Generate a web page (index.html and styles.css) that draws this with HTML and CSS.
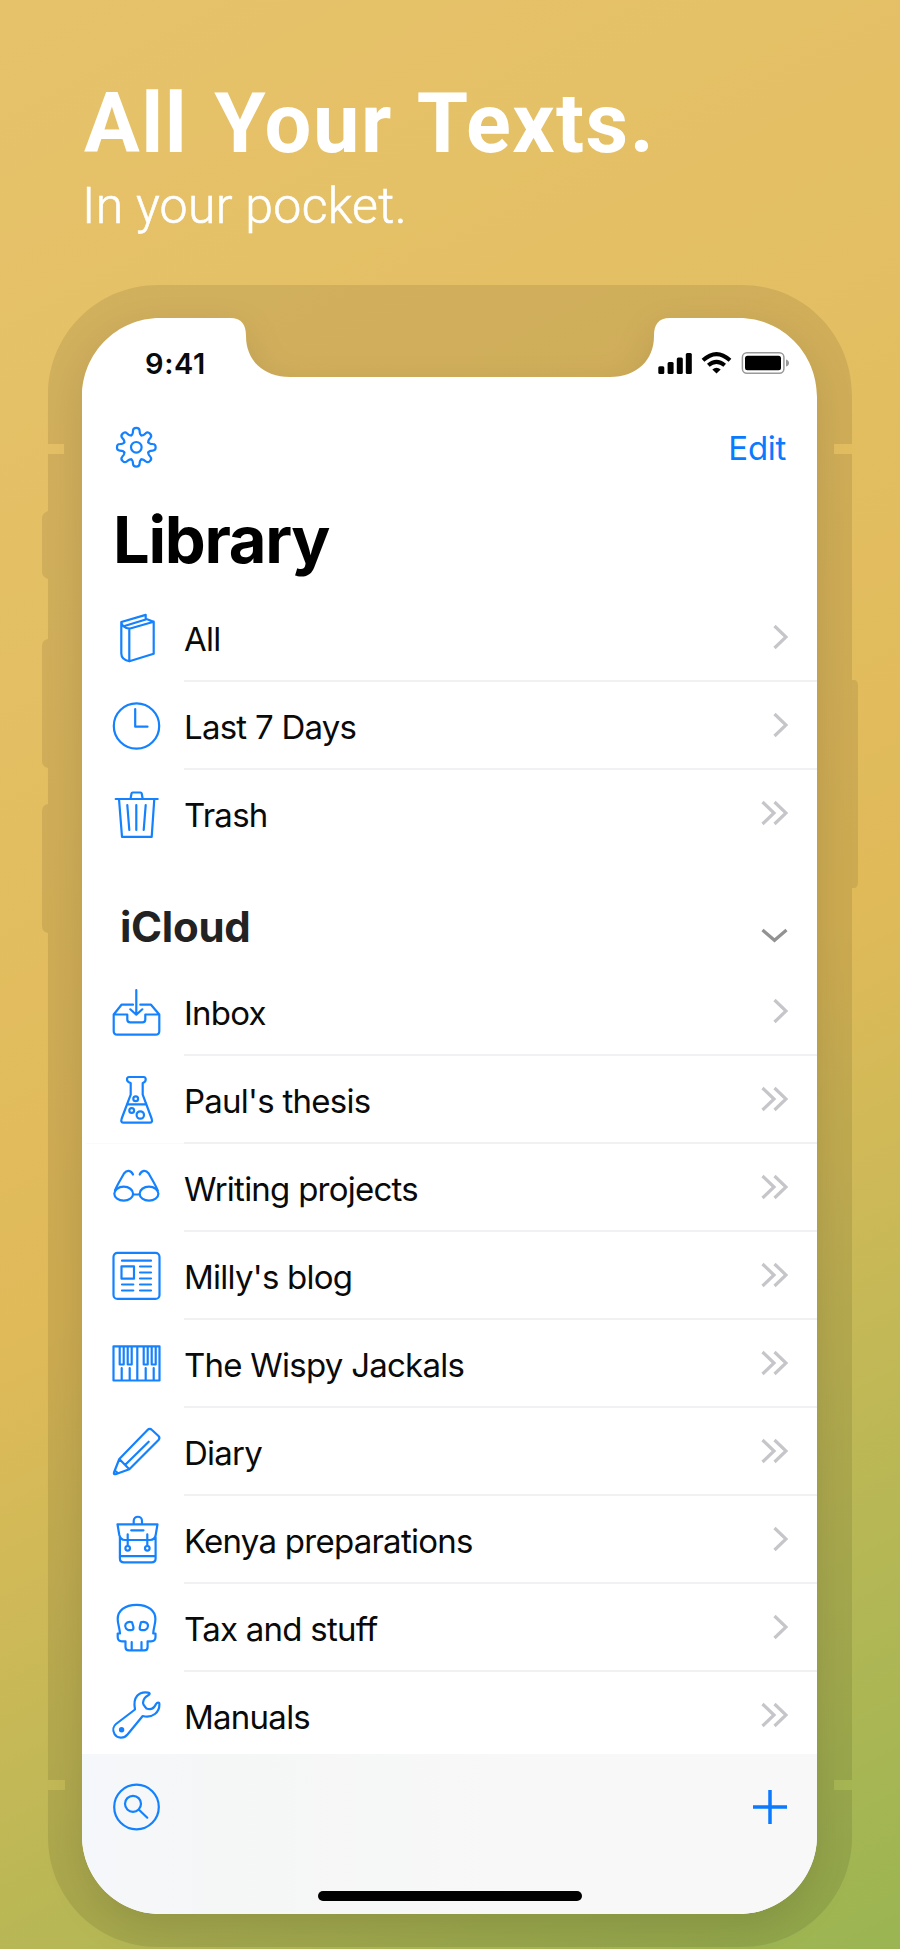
FILE: index.html
```html
<!DOCTYPE html>
<html lang="en">
<head>
<meta charset="utf-8">
<title>Library</title>
<link rel="stylesheet" href="styles.css">
</head>
<body>
<svg class="device" viewBox="0 0 900 1949" aria-hidden="true">
  <path class="frame" d="M158 285H742C803 285 852 334 852 395V444H834V454H852V680H855Q858 681 858 686V882Q858 887 855 888H852V1780H834V1790H852V1837C852 1898 803 1947 742 1947H158C97 1947 48 1898 48 1837V1790H65V1780H48V933Q42 932 42 926V811Q42 805 48 804V768Q42 767 42 761V646Q42 640 48 639V579Q42 577 42 572V518Q42 513 48 511V454H64V444H48V395C48 334 97 285 158 285Z"/>
  <path class="glass" d="M160 318H230C242 318 246 325 246 336C246 360 263 377 290 377H610C637 377 654 360 654 336C654 325 658 318 670 318H739C782 318 817 353 817 397V1835C817 1879 782 1914 739 1914H160C117 1914 82 1879 82 1835V397C82 353 117 318 160 318Z"/>
</svg>
<header class="hero">
  <h1>All Your Texts.</h1>
  <p>In your pocket.</p>
</header>
<main class="screen">
  <div class="status">
    <span class="time">9:41</span>
    <svg class="indicators" viewBox="0 0 132 24">
      <g><rect x=".3" y="15.3" width="6" height="7.7" rx="1.5"/><rect x="9.6" y="11" width="6" height="12" rx="1.5"/><rect x="18.8" y="6.4" width="6" height="16.6" rx="1.5"/><rect x="27.8" y="2" width="6" height="21" rx="1.5"/></g>
      <path class="wifi" d="M45 9.3Q58.500-3.200 72 9.300M50.300 14.300Q58.500 7.300 66.700 14.300"/>
      <path d="M54.300 18.500Q58.500 15 62.700 18.500L58.500 22.500Z"/>
      <rect class="cell" x="84.400" y="1.800" width="41.500" height="20.500" rx="4.500"/>
      <rect x="87" y="4.700" width="36" height="14.600" rx="2.500"/>
      <path class="nub" d="M128 8.500Q131 9.500 131 12T128 15.500Z"/>
    </svg>
  </div>
  <div class="navbar">
    <svg class="icon" viewBox="-24.300 -23.300 48 48">
      <defs><path id="tooth" d="M-5-12Q-3.700-13-3.500-14.500L-3.300-16.500C-3.200-20.300 3.200-20.300 3.300-16.500L3.500-14.500Q3.700-13 5-12"/></defs>
      <use href="#tooth"/><use href="#tooth" transform="rotate(45)"/><use href="#tooth" transform="rotate(90)"/><use href="#tooth" transform="rotate(135)"/><use href="#tooth" transform="rotate(180)"/><use href="#tooth" transform="rotate(225)"/><use href="#tooth" transform="rotate(270)"/><use href="#tooth" transform="rotate(315)"/>
      <circle r="5.300"/>
    </svg>
    <span class="edit">Edit</span>
  </div>
  <h2 class="title">Library</h2>

  <ul class="list">
    <li><svg class="icon" viewBox="0 0 48 48"><path d="M9.300 8V39.500Q9.300 45.500 17.300 47.300L41.700 39.700V7.700L17.300 14.700V47.300M17.300 14.700Q9.800 13.500 9.300 8L33.700 .9V4.700L41.700 7.700M12.500 12L33.700 5.500"/></svg><div class="cell-row"><span>All</span><svg class="chev" viewBox="0 0 28 28"><path d="M14.500 3L26 14L14.500 25"/></svg></div></li>
    <li><svg class="icon" viewBox="0 0 48 48"><circle cx="24.500" cy="24" r="22.700"/><path d="M23.200 7V24.700H35.500"/></svg><div class="cell-row"><span>Last 7 Days</span><svg class="chev" viewBox="0 0 28 28"><path d="M14.500 3L26 14L14.500 25"/></svg></div></li>
    <li><svg class="icon" viewBox="0 0 48 48"><path d="M3.700 9H45.700M18.500 9L19.500 3.500Q19.700 2.500 20.700 2.500H28.500Q29.500 2.500 29.700 3.500L30.700 9M7 9L10 46.800H39.700L42.300 9M15.300 15L17.300 40M24.300 15V40M33.700 15L31.700 40"/></svg><div class="cell-row last"><span>Trash</span><svg class="chev" viewBox="0 0 28 28"><path d="M2.500 3L14 14L2.500 25M14.500 3L26 14L14.500 25"/></svg></div></li>
  </ul>

  <div class="section"><h3>iCloud</h3><svg class="chev down" viewBox="0 0 28 28"><path d="M2.500 9L14.500 19.300L26.500 9"/></svg></div>

  <ul class="list">
    <li><svg class="icon" viewBox="0 0 48 48"><path d="M24.300 2V26.500M18.300 21.300L24.300 26.700L30.300 21.300M21 16.700H9.500L1.700 26.500V43Q1.700 46.700 5.300 46.700H43.700Q47.300 46.700 47.300 43V26.500L39 16.700H28.300M1.700 26.500H15.300V31.500Q15.300 34.300 18.300 34.300H30.500Q33.300 34.300 33.300 31.500V26.500H47.300"/></svg><div class="cell-row"><span>Inbox</span><svg class="chev" viewBox="0 0 28 28"><path d="M14.500 3L26 14L14.500 25"/></svg></div></li>
    <li><svg class="icon" viewBox="0 0 48 48"><path d="M17 1H31.700Q33.700 1 33.700 3.500T30.700 7V18.700L39.600 42.500Q41 46.700 37.500 46.700H11.800Q8.300 46.700 9.700 42.500L18.700 18.700V7Q15 6 15 3.500T17 1ZM15 28.300H34.300"/><circle cx="23.700" cy="22.700" r="2.400"/><circle cx="19.700" cy="34.500" r="2.400"/><circle cx="28.300" cy="39" r="3.700"/></svg><div class="cell-row"><span>Paul's thesis</span><svg class="chev" viewBox="0 0 28 28"><path d="M2.500 3L14 14L2.500 25M14.500 3L26 14L14.500 25"/></svg></div></li>
    <li class="lined"><svg class="icon" viewBox="0 0 48 48"><ellipse cx="11.700" cy="29.700" rx="9.400" ry="7"/><ellipse cx="37" cy="29.700" rx="9.400" ry="7"/><path d="M21.200 30.500H27.500M3 26.500C5 21 9 15 12 9.500C15 5.500 19 6 21 10.500M45.700 26.500C43.700 21 39.700 15 36.700 9.500C33.700 5.500 29.700 6 27.700 10.500"/></svg><div class="cell-row"><span>Writing projects</span><svg class="chev" viewBox="0 0 28 28"><path d="M2.500 3L14 14L2.500 25M14.500 3L26 14L14.500 25"/></svg></div></li>
    <li><svg class="icon" viewBox="0 0 48 48"><rect x="1.500" y=".9" width="46" height="46" rx="4"/><path d="M10 8.700H39M28 14.500H39M28 20.500H39M28 26.500H39M28 32.500H39M28 38.500H39M10 32.500H21.300M10 38.500H21.300M9.500 14.300H22V26.700H9.500Z"/></svg><div class="cell-row"><span>Milly's blog</span><svg class="chev" viewBox="0 0 28 28"><path d="M2.500 3L14 14L2.500 25M14.500 3L26 14L14.500 25"/></svg></div></li>
    <li><svg class="icon" viewBox="0 0 48 48"><path d="M1.500 6.300H47.500V40.500H1.500ZM25.300 6.300V40.500M7.700 6.300V24.500H11.700V6.300M15.700 6.300V24.500H19.700V6.300M31.700 6.300V24.500H35.700V6.300M39.700 6.300V24.500H43.700V6.300M9.700 28V40M17.700 28V40M33.700 28V40M41.700 28V40"/></svg><div class="cell-row"><span>The Wispy Jackals</span><svg class="chev" viewBox="0 0 28 28"><path d="M2.500 3L14 14L2.500 25M14.500 3L26 14L14.500 25"/></svg></div></li>
    <li><svg class="icon" viewBox="0 0 48 48"><path d="M7.300 31L35.500 2Q37.700-.3 40 2L46.500 8Q48.300 10 46.500 12L17.300 41.200L3.500 46.200Q1.500 46.500 2 44.500ZM7.300 31L17.300 41.200M2.500 43Q5 43.500 5.300 45.300M13.300 36.700L36.700 13.700"/></svg><div class="cell-row"><span>Diary</span><svg class="chev" viewBox="0 0 28 28"><path d="M2.500 3L14 14L2.500 25M14.500 3L26 14L14.500 25"/></svg></div></li>
    <li><svg class="icon" viewBox="0 0 48 48"><path d="M21.700 8V5C21.700-.7 30 -.7 30 5V8M5.500 8.300H45.500L43.700 19Q42.800 24 38 24H13Q8.500 24 7.300 19ZM7.900 21V42.500Q7.900 46.400 12 46.400H39.500Q43.600 46.400 43.600 42.500V21M7.900 40.200H43.600M19.200 14.300H31.500M15.700 18.300V30M35.300 18.300V30"/><circle cx="15.700" cy="32.300" r="2.300"/><circle cx="35.300" cy="32.300" r="2.300"/></svg><div class="cell-row"><span>Kenya preparations</span><svg class="chev" viewBox="0 0 28 28"><path d="M14.500 3L26 14L14.500 25"/></svg></div></li>
    <li><svg class="icon" viewBox="0 0 48 48"><path d="M24.500 .9C12.500 .9 5.700 7 5.700 15C5.700 20 7.500 23 8 29.500H5.700V33Q5.700 37.300 10 37.300H13.500V43Q13.500 46.400 17 46.400H32.300Q35.600 46.400 35.600 43V37.300H39Q43.500 37.300 43.500 33V29.500H41.200C41.700 23 43.400 20 43.400 15C43.400 7 36.500 .9 24.500 .9ZM19.700 38V46M29.500 38V46M20 18.200C16.500 17 13 19 13.200 22C13.500 26 17 26.500 20 26Q22 25.500 21.300 22.500ZM29 18.200C32.500 17 36.200 19 36 22C35.700 26 32 26.500 29 26Q27.200 25.500 27.900 22.500Z"/></svg><div class="cell-row"><span>Tax and stuff</span><svg class="chev" viewBox="0 0 28 28"><path d="M14.500 3L26 14L14.500 25"/></svg></div></li>
    <li class="cut"><svg class="icon" viewBox="0 0 48 48"><path d="M4 32L23 17.500C20.500 5 27 -.8 36 .6Q38.800 1 37 2.800C32.500 5.500 31.500 7 31 11C31 13 33 14.500 34.500 16.500C39 18.300 42 16.500 44 12C45.300 10 47.500 10 47.400 12.500C47.500 20 41 26.500 30.700 24L15.500 42.500C12 47 5 46.500 2.500 42C.3 38 1.500 34 4 32Z"/><circle class="dot" cx="9.600" cy="37.800" r="1.600"/></svg><div class="cell-row last"><span>Manuals</span><svg class="chev" viewBox="0 0 28 28"><path d="M2.500 3L14 14L2.500 25M14.500 3L26 14L14.500 25"/></svg></div></li>
  </ul>

  <footer class="toolbar">
    <div class="tools">
      <svg class="icon" viewBox="0 0 48 48"><circle cx="24.500" cy="24" r="22.300"/><circle cx="21" cy="20.800" r="8"/><path d="M26.700 26.500L35.300 34.700"/></svg>
      <svg class="plus" viewBox="0 0 34 34"><path d="M17 0V34M0 17H34"/></svg>
    </div>
    <div class="home"></div>
  </footer>
</main>
</body>
</html>
```
FILE: styles.css
```css
* { box-sizing: border-box; margin: 0; padding: 0; }

body {
  position: relative;
  width: 900px;
  height: 1949px;
  overflow: hidden;
  font-family: Inter, "Liberation Sans", sans-serif;
  color: #0a0a0a;
  background: linear-gradient(153deg, #e6c26b 0%, #e3be61 35%, #e0ba59 56%, #9ab552 100%);
}

/* Phone outline behind the content */
.device { position: absolute; inset: 0; width: 900px; height: 1949px; }
.frame { fill: rgba(0, 0, 0, .085); }
.glass { fill: #fff; filter: drop-shadow(0 14px 18px rgba(0, 0, 0, .1)); }

.hero {
  position: relative;
  height: 318px;
  padding: 75px 0 0 84px;
  color: #fff;
  font-family: Roboto, sans-serif;
  white-space: nowrap;
}
.hero h1 { font-size: 83px; line-height: 97px; font-weight: 700; letter-spacing: 1.500px; word-spacing: 4px; }
.hero p {
  margin: 4px 0 0 -2px;
  font-size: 50px;
  line-height: 60px;
  font-weight: 300;
  letter-spacing: .3px;
  -webkit-text-stroke: .6px #fff;
}

.screen {
  position: relative;
  display: flex;
  flex-direction: column;
  width: 735px;
  height: 1596px;
  margin-left: 82px;
}

.status {
  display: flex;
  justify-content: space-between;
  height: 106px;
  padding: 33px 27px 0 63px;
}
.time { font-size: 29px; line-height: 26px; font-weight: 600; letter-spacing: .6px; }
.indicators { width: 132px; height: 24px; fill: #000; }
.wifi { fill: none; stroke: #000; stroke-width: 4; }
.cell { fill: none; stroke: #999; stroke-width: 1.500; }
.nub { fill: #999; }

.navbar {
  display: flex;
  justify-content: space-between;
  height: 69px;
  padding: 0 31px 0 30px;
}
.edit { color: #0a7aff; font-size: 33px; line-height: 48px; letter-spacing: -.3px; }

.icon {
  flex: none;
  width: 48px;
  height: 48px;
  overflow: visible;
  fill: none;
  stroke: #1482ff;
  stroke-width: 2.200;
  stroke-linecap: round;
  stroke-linejoin: round;
}
.icon .dot { fill: #1482ff; }

.title {
  height: 100px;
  padding-left: 31px;
  font-size: 65px;
  line-height: 94px;
  font-weight: 700;
  letter-spacing: -1.300px;
  color: #000;
}

.list { list-style: none; }
.list li { display: flex; height: 88px; padding-left: 30px; }
.list li > .icon { margin: 21px 24px 0 0; }
.list li.cut { height: 83px; }
.list li.lined { background: linear-gradient(#fafafa, #fafafa) 4px 0 / 98px 1px no-repeat; }
.cell-row {
  display: flex;
  flex: 1;
  justify-content: space-between;
  align-items: center;
  height: 89px;
  padding: 0 29px 0 0;
  border-bottom: 2px solid #f1f1f3;
  font-size: 33px;
}
.cell-row.last { border-color: transparent; }
.cell-row span { padding-top: 4px; letter-spacing: -.75px; }
.chev {
  width: 28px;
  height: 28px;
  fill: none;
  stroke: #c6c6ca;
  stroke-width: 3.200;
}
.chev.down { stroke: #929292; }

.section {
  display: flex;
  justify-content: space-between;
  align-items: center;
  height: 110px;
  padding: 30px 29px 0 38px;
}
.section h3 { font-size: 42px; line-height: 50px; font-weight: 700; letter-spacing: -.3px; color: #222; }
.section .chev { margin-top: 15px; }

.toolbar {
  flex: 1;
  padding: 29px 30px 0;
  border-radius: 0 0 78px 78px;
  background: linear-gradient(90deg, #f5f8fb 0, #f5f6f6 20%, #f8f8f8 60%);
}
.tools { display: flex; justify-content: space-between; align-items: center; height: 48px; }
.plus { width: 34px; height: 34px; stroke: #0a7aff; stroke-width: 3.500; }
.home { width: 264px; height: 10px; margin: 60px auto 0 206px; border-radius: 5px; background: #000; }
```
